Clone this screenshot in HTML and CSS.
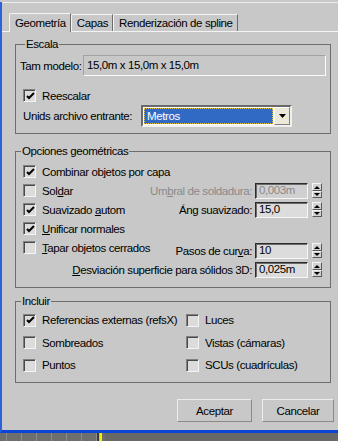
FILE: index.html
```html
<!DOCTYPE html>
<html lang="es">
<head>
    <meta charset="UTF-8">
    <title>Importar DWG</title>
    <link rel="stylesheet" href="styles.css">
</head>
<body>
    <div class="dialog">
        <div class="topline"></div>

        <!-- Tabs -->
        <div class="tabs">
            <div class="tab active">Geometría</div>
            <div class="tab">Capas</div>
            <div class="tab">Renderización de spline</div>
        </div>

        <div class="panel">
            <!-- Escala -->
            <fieldset class="group escala">
                <legend>Escala</legend>
                <div class="model-row">
                    <span class="model-label">Tam modelo:</span>
                    <div class="readout">15,0m x 15,0m x 15,0m</div>
                </div>
                <label class="check reescalar">
                    <span class="box"><svg width="9" height="9" viewBox="0 0 9 9"><path d="M1 4 L3 6 L8 1" fill="none" stroke="#000" stroke-width="2"/></svg></span>
                    Reescalar
                </label>
                <div class="units-row">
                    <span class="units-label">Unids archivo entrante:</span>
                    <div class="combo">
                        <div class="combo-val"><span>Metros</span></div>
                        <div class="combo-btn"><svg width="7" height="4" viewBox="0 0 7 4"><path d="M0 0 H7 L3.5 4 Z" fill="#000"/></svg></div>
                    </div>
                </div>
            </fieldset>

            <!-- Opciones geométricas -->
            <fieldset class="group opciones">
                <legend>Opciones geométricas</legend>
                <div class="geo">
                    <label class="check r1">
                        <span class="box"><svg width="9" height="9" viewBox="0 0 9 9"><path d="M1 4 L3 6 L8 1" fill="none" stroke="#000" stroke-width="2"/></svg></span>
                        Combinar objetos por capa
                    </label>
                    <label class="check r2"><span class="box"></span>Sol<u>d</u>ar</label>
                    <label class="check r3">
                        <span class="box"><svg width="9" height="9" viewBox="0 0 9 9"><path d="M1 4 L3 6 L8 1" fill="none" stroke="#000" stroke-width="2"/></svg></span>
                        <span>Suavizado <u>a</u>utom</span>
                    </label>
                    <label class="check r4">
                        <span class="box"><svg width="9" height="9" viewBox="0 0 9 9"><path d="M1 4 L3 6 L8 1" fill="none" stroke="#000" stroke-width="2"/></svg></span>
                        <span><u>U</u>nificar normales</span>
                    </label>
                    <label class="check r5"><span class="box"></span><span><u>T</u>apar objetos cerrados</span></label>

                    <div class="spin-row r2 disabled">
                        <span>Um<u>b</u>ral de soldadura:</span>
                        <div class="spin-field">0,003m</div>
                        <div class="spinner"><span class="up"></span><span class="down"></span></div>
                    </div>
                    <div class="spin-row r3">
                        <span>Án<u>g</u> suavizado:</span>
                        <div class="spin-field">15,0</div>
                        <div class="spinner"><span class="up"></span><span class="down"></span></div>
                    </div>
                    <div class="spin-row r5 shifted">
                        <span>Pasos de cur<u>v</u>a:</span>
                        <div class="spin-field">10</div>
                        <div class="spinner"><span class="up"></span><span class="down"></span></div>
                    </div>
                    <div class="spin-row r6 shifted">
                        <span><u>D</u>esviación superficie para sólidos 3D:</span>
                        <div class="spin-field">0,025m</div>
                        <div class="spinner"><span class="up"></span><span class="down"></span></div>
                    </div>
                </div>
            </fieldset>

            <!-- Incluir -->
            <fieldset class="group incluir">
                <legend>Incluir</legend>
                <div class="include">
                    <label class="check">
                        <span class="box"><svg width="9" height="9" viewBox="0 0 9 9"><path d="M1 4 L3 6 L8 1" fill="none" stroke="#000" stroke-width="2"/></svg></span>
                        Referencias externas (refsX)
                    </label>
                    <label class="check"><span class="box"></span>Luces</label>
                    <label class="check"><span class="box"></span>Sombreados</label>
                    <label class="check"><span class="box"></span>Vistas (cámaras)</label>
                    <label class="check"><span class="box"></span>Puntos</label>
                    <label class="check"><span class="box"></span>SCUs (cuadrículas)</label>
                </div>
            </fieldset>
        </div>

        <div class="buttons">
            <button class="btn ok">Aceptar</button>
            <button class="btn cancel">Cancelar</button>
        </div>
    </div>

    <!-- viewport strip behind the dialog -->
    <div class="viewport">
        <div class="vp-grid"></div>
        <div class="vp-sep"></div>
        <div class="vp-mark"></div>
        <div class="vp-rest"></div>
    </div>
</body>
</html>
```

FILE: styles.css
```css
/* Basic reset */
* {
    box-sizing: border-box;
    margin: 0;
    padding: 0;
}

body {
    font-family: "Liberation Sans", Arial, sans-serif;
    font-size: 11.5px;
    letter-spacing: -0.4px;
    color: #000;
    background-color: #c8c8c8;
    width: 338px;
    height: 441px;
    overflow: hidden;
}

u {
    text-decoration: underline;
    text-underline-offset: 1px;
}

.dialog {
    height: 431px;
    border-left: 2px solid #2a62dc;
    border-bottom: 3px solid #0b45d6;
    background-color: #c8c8c8;
}

.topline {
    margin-top: 2px;
    height: 1px;
    background-color: #ececec;
}

/* Tabs */
.tabs {
    display: flex;
    align-items: flex-end;
    height: 29px;
    padding: 10px 0 0 7px;
    border-bottom: 1px solid #f4f4f4;
}

.tab {
    height: 17px;
    line-height: 16px;
    padding: 0 4px 0 5px;
    border-top: 1px solid #f4f4f4;
    border-left: 1px solid #f4f4f4;
    border-right: 1px solid #6c6c6c;
    border-top-left-radius: 2px;
    white-space: nowrap;
}

.tab.active {
    height: 19px;
    margin-bottom: -1px;
    line-height: 18px;
    background-color: #c8c8c8;
}

.panel {
    padding: 5px 7px 0 13px;
}

/* Group boxes */
.group {
    border: 1px solid #6e6e6e;
    padding: 0;
}

.group legend {
    margin-left: 5px;
    padding: 0 1px;
    line-height: 14px;
}

.escala {
    padding: 4px 4px 6px 4px;
}

.opciones {
    margin-top: 10px;
}

.incluir {
    margin-top: 6px;
}

.model-row {
    display: flex;
    align-items: center;
    height: 21px;
}

.model-label {
    width: 63px;
    white-space: nowrap;
}

.readout {
    width: 243px;
    height: 21px;
    line-height: 19px;
    padding-left: 3px;
    border: 1px solid;
    border-color: #a2a2a2 #fafafa #fafafa #a2a2a2;
    white-space: nowrap;
}

/* Checkboxes */
.check {
    display: flex;
    align-items: center;
    white-space: nowrap;
}

.box {
    width: 13px;
    height: 13px;
    margin-right: 6px;
    flex-shrink: 0;
    display: flex;
    align-items: center;
    justify-content: center;
    background-color: #dcdcdc;
    border: 1px solid;
    border-color: #808080 #f4f4f4 #f4f4f4 #808080;
    box-shadow: inset 1px 1px 0 #4a4a4a;
}

.box svg {
    margin: 1px 0 0 1px;
}

.reescalar {
    height: 13px;
    margin: 13px 0 0 3px;
}

.units-row {
    display: flex;
    align-items: center;
    height: 22px;
    margin: 3px 0 0 3px;
}

.units-label {
    width: 118px;
    white-space: nowrap;
}

/* Dropdown */
.combo {
    display: flex;
    width: 151px;
    height: 22px;
    border: 2px solid;
    border-color: #6a6a6a #f0f0f0 #f0f0f0 #6a6a6a;
    background-color: #fff;
}

.combo-val {
    flex: 1;
    padding: 1px;
    background-color: #fff;
}

.combo-val span {
    display: block;
    height: 100%;
    padding-left: 2px;
    line-height: 15px;
    color: #fff;
    background-color: #316ac5;
    border: 1px dotted #e8c040;
}

.combo-btn {
    width: 16px;
    display: flex;
    align-items: center;
    justify-content: center;
    background-color: #ece9d8;
    border: 1px solid;
    border-color: #fff #808080 #808080 #fff;
}

/* Opciones geométricas: one column, left and right items share rows */
.geo {
    display: grid;
    grid-template-columns: 1fr;
    grid-template-rows: repeat(6, 19px);
    align-items: center;
    padding: 4px 8px 11px 7px;
}

.r1 { grid-row: 1; }
.r2 { grid-row: 2; }
.r3 { grid-row: 3; }
.r4 { grid-row: 4; }
.r5 { grid-row: 5; }
.r6 { grid-row: 6; }

.geo .check {
    grid-column: 1;
    justify-self: start;
}

.spin-row {
    display: flex;
    align-items: center;
    grid-column: 1;
    justify-self: end;
    white-space: nowrap;
}

.spin-row.shifted {
    margin-top: 6px;
}

.spin-row.disabled {
    color: #8a8a8a;
}

.spin-field {
    width: 53px;
    height: 16px;
    margin-left: 3px;
    padding-left: 3px;
    line-height: 13px;
    background-color: #dcdcdc;
    border: 1px solid;
    border-color: #2c2c2c #f6f6f6 #f6f6f6 #2c2c2c;
    box-shadow: inset 1px 1px 0 #6a6a6a;
    color: #000;
}

.disabled .spin-field {
    color: #8a8a8a;
    background-color: #d0d0d0;
}

.spinner {
    width: 10px;
    height: 15px;
    margin-left: 4px;
    display: flex;
    flex-direction: column;
}

.spinner span {
    flex: 1;
    position: relative;
    background-color: #d2d2d2;
    border: 1px solid;
    border-color: #f4f4f4 #5a5a5a #5a5a5a #f4f4f4;
}

/* small arrows drawn with borders */
.spinner span::after {
    content: "";
    position: absolute;
    left: 1px;
    top: 2px;
    border-left: 3px solid transparent;
    border-right: 3px solid transparent;
}

.spinner .up::after {
    border-bottom: 3px solid #000;
}

.spinner .down::after {
    top: 1px;
    border-top: 3px solid #000;
}

/* Incluir */
.include {
    display: grid;
    grid-template-columns: 163px 1fr;
    grid-auto-rows: 22.5px;
    align-items: center;
    padding: 1px 0 5.5px 7px;
}

/* Buttons */
.buttons {
    display: flex;
    justify-content: flex-end;
    gap: 10px;
    margin-top: 16px;
    padding-right: 4px;
}

.btn {
    width: 75px;
    height: 23px;
    font-family: inherit;
    font-size: inherit;
    letter-spacing: inherit;
    color: #000;
    background-color: #c8c8c8;
    border: 1px solid;
    border-color: #ececec #8a8a8a #8a8a8a #ececec;
}

.btn.cancel {
    width: 72px;
}

/* Viewport strip below the dialog */
.viewport {
    display: flex;
    height: 10px;
}

.vp-grid {
    width: 97px;
    background-color: #6e6e6e;
    background-image: repeating-linear-gradient(90deg, transparent 0 6px, #8c8c8c 6px 7px, transparent 7px 15px);
}

.vp-sep {
    width: 3px;
    background-color: #3a3a3a;
    border-right: 1px solid #bcbcbc;
}

.vp-mark {
    width: 5px;
    background-color: #6e6e6e;
    border-left: 2px solid #f0f000;
}

.vp-rest {
    flex: 1;
    background-color: #686868;
}
```
